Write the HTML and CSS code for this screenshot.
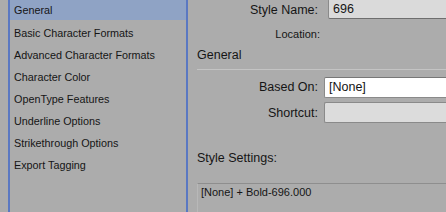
FILE: index.html
```html
<!DOCTYPE html>
<html lang="en">
<head>
<meta charset="UTF-8" />
<title>Character Style Options</title>
<link rel="stylesheet" href="styles.css">
</head>
<body>
<div class="dialog">
  <nav class="sidebar">
    <ul class="nav-list">
      <li class="nav-item selected">General</li>
      <li class="nav-item">Basic Character Formats</li>
      <li class="nav-item">Advanced Character Formats</li>
      <li class="nav-item">Character Color</li>
      <li class="nav-item">OpenType Features</li>
      <li class="nav-item">Underline Options</li>
      <li class="nav-item">Strikethrough Options</li>
      <li class="nav-item">Export Tagging</li>
    </ul>
  </nav>

  <main class="pane">
    <div class="row row-name">
      <label class="field-label" for="style-name">Style Name:</label>
      <input class="field name-field" id="style-name" type="text" value="696" />
    </div>
    <div class="row row-location">
      <span class="field-label small">Location:</span>
    </div>

    <h2 class="section-title">General</h2>
    <div class="divider"></div>

    <div class="row row-based">
      <label class="field-label" for="based-on">Based On:</label>
      <div class="field select-field" id="based-on">[None]</div>
    </div>
    <div class="row row-shortcut">
      <label class="field-label" for="shortcut">Shortcut:</label>
      <input class="field shortcut-field" id="shortcut" type="text" />
    </div>

    <h3 class="settings-title">Style Settings:</h3>
    <div class="settings-box">[None] + Bold-696.000</div>
  </main>
</div>
</body>
</html>
```

FILE: styles.css
```css
* {
  box-sizing: border-box;
}
body {
  margin: 0;
  background: #acacac;
  font-family: "Liberation Sans", Arial, sans-serif;
  font-size: 11.5px;
  color: #151515;
  overflow: hidden;
}

.dialog {
  display: flex;
  height: 212px;
  overflow: hidden;
}

/* Sidebar list */
.sidebar {
  margin-left: 8px;
  width: 180px;
  flex: none;
  border-left: 2px solid #5a78c2;
  border-right: 2px solid #5a78c2;
}
.nav-list {
  list-style: none;
  margin: 0;
  padding: 0;
}
.nav-item {
  height: 22px;
  line-height: 22px;
  padding-left: 4px;
  font-size: 10.8px;
  white-space: nowrap;
}
.nav-item.selected {
  height: 20px;
  line-height: 20px;
  margin-bottom: 2px;
  background: #8fa3c5;
}

/* Right pane */
.pane {
  flex: 1;
  padding-left: 9px;
  min-width: 0;
  overflow: hidden;
}
.row {
  display: flex;
  align-items: center;
}
.field-label {
  width: 121px;
  flex: none;
  text-align: right;
  font-size: 12.5px;
}
.field-label.small {
  width: 123px;
  font-size: 11px;
}
.field {
  flex: 1;
  min-width: 0;
  font: inherit;
  font-size: 12.5px;
  color: #151515;
  padding: 0 4px;
  border: 1px solid #8a8a8a;
  border-radius: 2px 0 0 2px;
  border-right: none;
}

.row-name {
  height: 19px;
}
.name-field {
  margin-left: 10px;
  height: 20px;
  margin-top: -1px;
  background: #dadada;
  border-top: none;
  border-bottom-color: #6e6e6e;
}
.row-location {
  height: 30px;
}
.section-title {
  margin: 0;
  height: 20px;
  line-height: 12px;
  font-size: 12.5px;
  font-weight: normal;
}
.divider {
  height: 1px;
  background: #c4c4c4;
  margin-bottom: 6px;
}
.row-based {
  height: 22px;
}
.select-field {
  margin-left: 6px;
  height: 21px;
  line-height: 19px;
  background: #ffffff;
  border-top-color: #777;
}
.row-shortcut {
  margin-top: 4px;
  height: 21px;
}
.shortcut-field {
  margin-left: 6px;
  height: 21px;
  background: #dcdcdc;
}
.settings-title {
  margin: 28px 0 0 0;
  height: 32px;
  font-size: 12.5px;
  font-weight: normal;
}
.settings-box {
  border-top: 1px solid #8e8e8e;
  border-left: 1px solid #b8b8b8;
  height: 40px;
  padding: 2px 3px;
  font-size: 11px;
}
```
